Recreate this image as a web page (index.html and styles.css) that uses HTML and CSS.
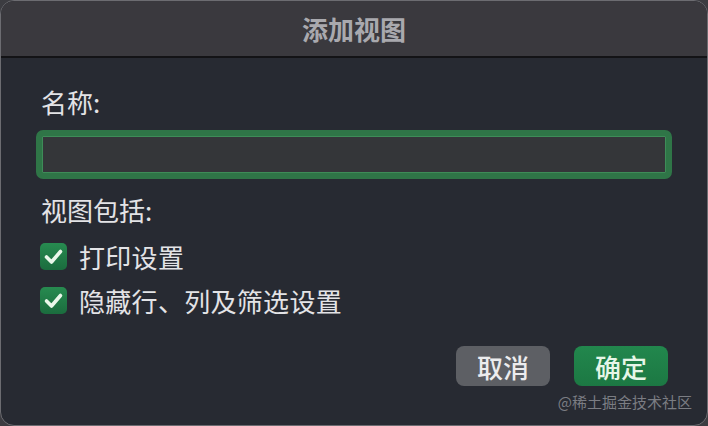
FILE: index.html
```html
<!DOCTYPE html>
<html lang="zh-CN">
<head>
    <meta charset="UTF-8">
    <title>添加视图</title>
    <link rel="stylesheet" href="styles.css">
</head>
<body>
    <div class="dialog">
        <div class="titlebar">添加视图</div>

        <div class="content">
            <div class="label">名称:</div>
            <div class="name-input"></div>

            <div class="label section">视图包括:</div>
            <div class="check-row first">
                <span class="checkbox">
                    <svg width="27" height="27" viewBox="0 0 27 27"><polyline points="6.5,14 11.5,19 20.5,8.5" fill="none" stroke="#eaf7ea" stroke-width="3.6" stroke-linecap="round" stroke-linejoin="round"/></svg>
                </span>
                <span>打印设置</span>
            </div>
            <div class="check-row">
                <span class="checkbox">
                    <svg width="27" height="27" viewBox="0 0 27 27"><polyline points="6.5,14 11.5,19 20.5,8.5" fill="none" stroke="#eaf7ea" stroke-width="3.6" stroke-linecap="round" stroke-linejoin="round"/></svg>
                </span>
                <span>隐藏行、列及筛选设置</span>
            </div>

            <div class="actions">
                <button class="btn cancel">取消</button>
                <button class="btn ok">确定</button>
            </div>
        </div>

        <div class="watermark">@稀土掘金技术社区</div>
    </div>
</body>
</html>
```

FILE: styles.css
```css
html, body {
    margin: 0;
    background: #3c3c41;
}
body {
    font-family: "Noto Sans CJK SC", "Noto Sans", sans-serif;
    color: #e3e3e6;
}
.dialog {
    position: relative;
    width: 708px;
    height: 426px;
    box-sizing: border-box;
    border: 1px solid #6c6c71;
    border-radius: 14px;
    overflow: hidden;
    background: #272a32;
    display: flex;
    flex-direction: column;
}
.titlebar {
    height: 55px;
    background: #3a393e;
    border-bottom: 2px solid #131316;
    display: flex;
    align-items: center;
    justify-content: center;
    font-size: 26px;
    font-weight: bold;
    color: #a9a9ae;
}
.content {
    padding: 27px 35px 0 35px;
}
.label {
    font-size: 26px;
    line-height: 34px;
    padding-left: 5px;
}
.label.section {margin-top: 14px;}
.name-input {
    margin-top: 11px;
    height: 49px;
    box-sizing: border-box;
    border: 6px solid #2f7547;
    border-radius: 7px;
    background: #343639;
    box-shadow: inset 0 0 0 1px #3e8c58;
}
.check-row {
    display: flex;
    align-items: center;
    gap: 12px;
    height: 34px;
    padding-left: 4px;
    margin-top: 10px;
    font-size: 26px;
    letter-spacing: 0.3px;
}
.check-row.first {margin-top: 12px;}
.checkbox {
    width: 27px;
    height: 27px;
    border-radius: 5px;
    background: linear-gradient(#278b50, #1b6c3e);
    display: flex;
}
.actions {
    display: flex;
    justify-content: flex-end;
    gap: 24px;
    margin-top: 29px;
    padding-right: 4px;
}
.btn {
    width: 94px;
    height: 40px;
    border: none;
    border-radius: 8px;
    font-family: inherit;
    font-size: 26px;
    font-weight: 500;
    padding: 0;
    cursor: pointer;
}
.btn.cancel {background: #5d5f64; color: #ececee;}
.btn.ok {background: linear-gradient(#22874d, #1c7843); color: #e6f6e8;}
.watermark {
    position: absolute;
    right: 15px;
    bottom: 14px;
    font-size: 15px;
    line-height: 18px;
    color: #7b7d83;
}
```
